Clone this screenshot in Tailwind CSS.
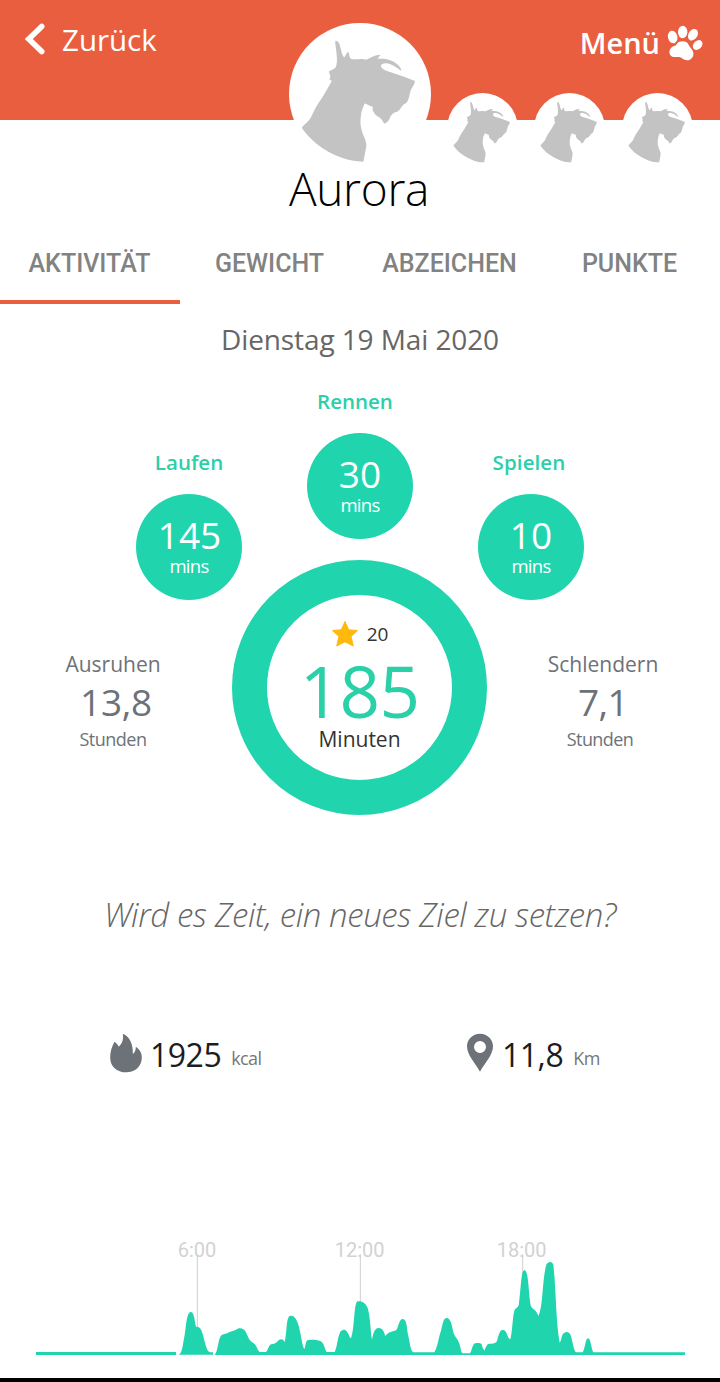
<!DOCTYPE html>
<html lang="de">
<head>
    <meta charset="UTF-8">
    <meta name="viewport" content="width=device-width, initial-scale=1.0">
    <title>Aurora - Aktivität</title>
    <script src="https://cdn.jsdelivr.net/npm/@tailwindcss/browser@4"></script>
</head>
<body class="bg-white overflow-hidden font-['Open_Sans',sans-serif]">
    <!-- Dog silhouette, reused by every avatar -->
    <svg class="hidden">
        <symbol id="dog" viewBox="28 40 424 424">
            <path fill="#c3c3c3" d="M167 93 C173 93 178 98 180 107 C184 121 186 136 193 143 C197 138 200 129 205 126 C208 133 208 141 212 147 C226 151 240 145 254 149 C262 151 266 144 274 142 C282 138 291 134 301 136 L292 146 C306 147 318 146 330 151 C347 157 360 168 364 181 L361 182 C351 174 339 164 324 161 C314 158 304 161 302 168 C304 177 314 182 325 185 C352 193 380 204 404 213 C404 223 395 232 391 242 C387 255 387 267 379 278 L370 283 C362 291 360 299 351 305 C342 306 336 312 331 319 C327 329 323 337 313 341 C308 335 306 327 299 323 L287 315 C282 308 276 301 278 290 C268 287 260 281 254 280 C250 290 244 300 243 315 C240 333 241 349 246 364 C251 381 259 390 259 405 C257 422 253 438 250 454 C228 454 205 450 182 441 C156 431 134 419 111 401 C94 388 77 370 66 353 C76 340 87 335 94 321 L106 296 C117 275 131 259 141 239 L156 213 L148 208 L152 201 L147 185 C154 180 164 179 168 171 C174 155 170 136 169 122 C169 112 164 101 167 93 Z"/>
        </symbol>
    </svg>

    <!-- Top bar -->
    <header class="bg-[#ea5e40] h-[120px] relative">
        <div class="flex justify-between px-6 pt-5 text-white">
            <button class="flex h-10 items-center">
                <svg class="w-[22px] h-8 -mt-[3px]" viewBox="0 0 22 32" fill="none" stroke="#fff" stroke-width="5.6" stroke-linecap="round">
                    <path d="M17.7 3.5 L4.8 16 L17.7 28.5" />
                </svg>
                <span class="ml-4 text-[29.5px]">Zurück</span>
            </button>
            <button class="flex h-10 items-center -mr-[7px]">
                <span class="text-[29px] font-semibold mt-1.5">Menü</span>
                <svg class="w-9 h-9 ml-[7px] mt-1.5" viewBox="711 45 108 108" fill="#fff">
                    <ellipse cx="728" cy="81" rx="14" ry="19" transform="rotate(-14 728 81)"/>
                    <ellipse cx="758" cy="66" rx="14" ry="18.5" transform="rotate(2 758 66)"/>
                    <ellipse cx="789" cy="74" rx="13.5" ry="18.5" transform="rotate(32 789 74)"/>
                    <ellipse cx="803" cy="105" rx="12.5" ry="16.5" transform="rotate(42 803 105)"/>
                    <path d="M741 101 C748 91 771 91 775 103 C778 112 788 117 790 128 C792 140 783 151 771 151 C760 150 756 142 747 141 C737 140 727 144 720 134 C715 122 722 111 732 108 C737 107 739 104 741 101 Z"/>
                </svg>
            </button>
        </div>
        <!-- Avatars hang over the lower edge of the bar -->
        <div class="absolute left-[289px] top-[23px] flex items-end">
            <div class="size-[142px] rounded-full bg-white"><svg class="size-full"><use href="#dog"/></svg></div>
            <div class="size-[71px] rounded-full bg-white ml-[15.5px] mb-px"><svg class="size-full"><use href="#dog"/></svg></div>
            <div class="size-[71px] rounded-full bg-white ml-4 mb-px"><svg class="size-full"><use href="#dog"/></svg></div>
            <div class="size-[71px] rounded-full bg-white ml-[17px] mb-px"><svg class="size-full"><use href="#dog"/></svg></div>
        </div>
    </header>

    <h1 class="mt-[38px] h-[60px] pr-0.5 text-center text-[46px] leading-[60px] font-light tracking-[-0.3px] text-black">Aurora</h1>

    <!-- Tabs -->
    <nav class="mt-0.5 flex h-[84px] font-['Roboto',sans-serif] text-[25px] leading-[88px] font-medium text-[#828282] text-center">
        <a class="w-[180px] pr-px border-b-4 border-[#ea5e40]">AKTIVITÄT</a>
        <a class="w-[180px] pr-px">GEWICHT</a>
        <a class="w-[180px] pr-px">ABZEICHEN</a>
        <a class="w-[180px] pr-px">PUNKTE</a>
    </nav>

    <main>
        <p class="mt-[15px] h-10 text-center text-[28px] leading-10 tracking-[-0.1px] text-[#666]">Dienstag 19 Mai 2020</p>

        <!-- Minutes per activity -->
        <div class="mt-7 flex justify-center gap-[65px] text-center">
            <div class="mt-[61px] w-[106px]">
                <div class="-mt-px text-[20.5px] leading-[30px] font-semibold text-[#2bcfa8]">Laufen</div>
                <div class="mt-[17px] size-[106px] rounded-full bg-[#20d4ae] text-white pt-[19px]">
                    <div class="pl-px text-[37px] leading-11">145</div>
                    <div class="text-[18.5px] leading-4.5 tracking-[-0.7px]">mins</div>
                </div>
            </div>
            <div class="w-[106px]">
                <div class="-mt-px -ml-2.5 text-[20.5px] leading-[30px] font-semibold text-[#2bcfa8]">Rennen</div>
                <div class="mt-[17px] size-[106px] rounded-full bg-[#20d4ae] text-white pt-[19px]">
                    <div class="text-[37px] leading-11">30</div>
                    <div class="text-[18.5px] leading-4.5 tracking-[-0.7px]">mins</div>
                </div>
            </div>
            <div class="mt-[61px] w-[106px]">
                <div class="-mt-px -ml-1 text-[20.5px] leading-[30px] font-semibold tracking-[0.1px] text-[#2bcfa8]">Spielen</div>
                <div class="mt-[17px] size-[106px] rounded-full bg-[#20d4ae] text-white pt-[19px]">
                    <div class="text-[37px] leading-11">10</div>
                    <div class="text-[18.5px] leading-4.5 tracking-[-0.7px]">mins</div>
                </div>
            </div>
        </div>

        <!-- Daily total with rest and stroll hours at its sides -->
        <div class="-mt-10 flex pl-[33px] text-center text-[#6d7278]">
            <div class="w-[160px] mr-[39px] pt-[89px]">
                <div class="text-[21px] leading-[30px]">Ausruhen</div>
                <div class="pl-1.5 text-[37px] leading-[46px] tracking-[-0.3px]">13,8</div>
                <div class="mt-0.5 text-lg leading-6 tracking-[-0.5px]">Stunden</div>
            </div>
            <div class="size-[255px] rounded-full border-[35px] border-[#20d4ae] pt-6">
                <div class="flex justify-center items-center h-[30px]">
                    <svg class="w-7 h-7 mr-2" viewBox="0 0 28 28" fill="#ffb80c" stroke="#ffb80c" stroke-width="1" stroke-linejoin="round">
                        <path d="M14 1.5 L17.7 9.8 L26.5 10.5 L20 16.5 L22.3 26 L14 21.8 L5.7 26 L8 16.5 L1.5 10.5 L10.3 9.8 Z"/>
                    </svg>
                    <span class="text-[19px] text-[#333]">20</span>
                </div>
                <div class="text-[71px] leading-[84px] tracking-[-0.8px] text-[#2bcfa8]">185</div>
                <div class="-mt-2 text-[21px] leading-7 text-[#333]">Minuten</div>
            </div>
            <div class="w-[160px] ml-[36px] pt-[89px]">
                <div class="text-[21px] leading-[30px]">Schlendern</div>
                <div class="text-[37px] leading-[46px] tracking-[-0.6px]">7,1</div>
                <div class="mt-0.5 pr-1.5 text-lg leading-6 tracking-[-0.6px]">Stunden</div>
            </div>
        </div>

        <p class="mt-[76px] h-12 text-center text-[33px] leading-12 font-light italic tracking-[-0.4px] text-[#666]">Wird es Zeit, ein neues Ziel zu setzen?</p>

        <!-- Calories and distance -->
        <div class="mt-[90px] flex h-12">
            <div class="flex w-1/2 pl-[109px] items-center">
                <svg class="w-[34px] h-10" viewBox="57 41 101 120" fill="#6d7278">
                    <path d="M98 43 C119 52 129 73 128 104 C134 99 137 92 137 82 C149 90 155 101 155 114 C155 141 135 159 108 159 C80 159 60 141 60 115 C60 97 65 81 73 67 C78 70 83 76 86 82 C95 73 101 61 98 43 Z"/>
                </svg>
                <span class="ml-[7px] text-[32px] tracking-[-0.5px] mt-[3px] text-[#1c1c22]">1925</span>
                <span class="ml-2.5 mt-2.5 text-lg text-[#777] tracking-[-0.6px]">kcal</span>
            </div>
            <div class="flex w-1/2 pl-[106px] items-center">
                <svg class="w-[28px] h-10" viewBox="48 40 84 120" fill="#6d7278" fill-rule="evenodd">
                    <path d="M90 42 C112 42 129 59 129 80 C129 105 107 127 90 156 C73 127 51 105 51 80 C51 59 68 42 90 42 Z M90 64 A18 18 0 1 0 90 100 A18 18 0 1 0 90 64 Z"/>
                </svg>
                <span class="ml-2 text-[32px] tracking-[-0.5px] mt-[3px] text-[#1c1c22]">11,8</span>
                <span class="ml-2.5 mt-2.5 text-lg text-[#777] tracking-[-0.4px]">Km</span>
            </div>
        </div>

        <!-- Activity over the day -->
        <svg class="block mt-[153px] w-[720px] h-[148px]" viewBox="-480 0 2160 444">
            <g class="font-['Roboto',sans-serif]" font-size="60" fill="#d2d2d2" text-anchor="middle">
                <text x="111" y="80">6:00</text>
                <text x="599" y="80">12:00</text>
                <text x="1085" y="80">18:00</text>
            </g>
            <path d="M112 73 V372 M601 73 V372 M1088 73 V372" stroke="#cfcfcf" stroke-width="3"/>
            <g fill="#20d4ae">
                <path d="M-372 366 H48 V375 H-372 Z"/>
                <path d="M57 374 C67 368 69 340 74 315 C79 280 81 246 92 246 C103 246 103 270 108 290 C120 289 124 297 129 315 C136 341 139 362 150 367 H159 V374 Z"/>
                <path d="M164 374 C175 365 173 325 185 315 C192 311 200 313 207 307 C220 303 227 301 236 295 C253 292 258 306 263 318 C268 332 273 334 280 339 C292 347 292 363 300 366 H318 C324 362 324 349 333 343 C343 341 349 340 354 332 C363 325 371 327 374 337 C381 310 378 265 389 258 C402 253 411 269 416 287 C425 319 425 344 433 357 C438 347 436 332 444 330 C456 329 470 329 481 333 C494 339 493 357 500 366 H524 C532 350 534 314 542 304 C548 298 556 297 560 304 C568 314 567 321 573 325 C585 290 581 222 592 214 C606 212 619 220 624 237 C632 270 632 311 636 329 C640 307 645 294 656 294 C669 294 672 306 676 318 C688 302 701 306 709 300 C716 291 717 268 727 267 C742 265 740 299 745 318 C750 340 752 365 761 367 H823 C834 348 836 320 843 302 C849 280 850 264 860 264 C873 264 876 289 881 310 C887 325 894 327 898 341 C903 354 902 364 907 370 H930 C937 360 936 343 946 340 C957 338 967 338 967 351 L973 362 C977 354 979 342 988 341 C997 341 1003 341 1010 335 C1015 322 1018 299 1028 300 C1042 299 1041 325 1051 328 C1058 299 1057 265 1063 242 C1067 231 1075 237 1077 219 C1083 180 1083 121 1093 121 C1107 121 1105 195 1113 229 C1119 240 1129 239 1135 258 C1149 234 1146 158 1158 107 C1162 93 1178 92 1180 105 C1188 169 1187 270 1199 338 C1205 332 1204 311 1213 308 C1227 301 1233 314 1235 326 C1239 345 1243 363 1248 367 H1268 C1276 354 1276 325 1284 325 C1293 325 1294 359 1300 367 H1575 V375 H164 Z"/>
            </g>
        </svg>
    </main>

    <div class="h-1 bg-black"></div>
</body>
</html>
